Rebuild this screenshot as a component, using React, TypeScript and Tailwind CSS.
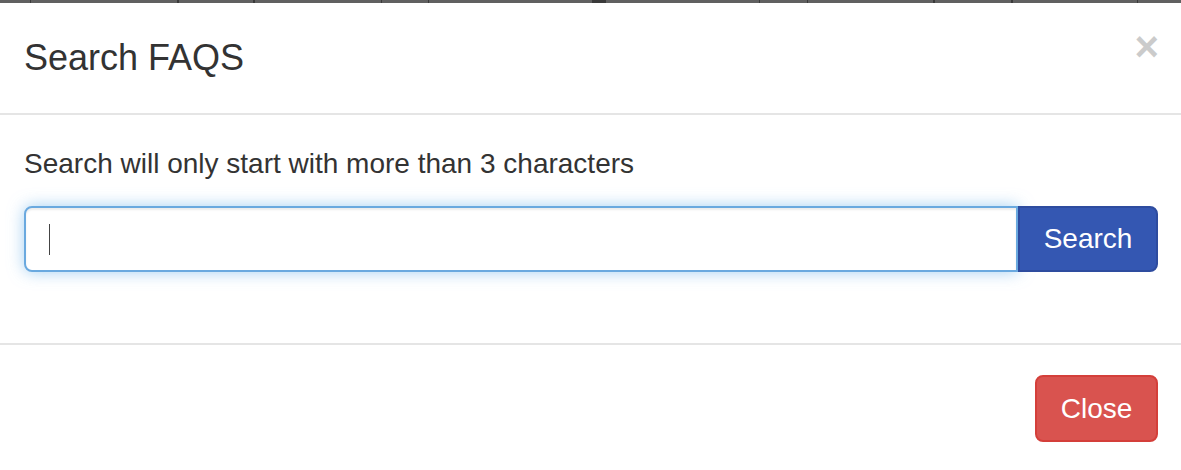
import React from "react";

const ticks: [number, number][] = [
  [30, 1],
  [177, 2],
  [253, 2],
  [381, 1],
  [428, 1],
  [592, 14],
  [759, 1],
  [807, 1],
  [933, 2],
  [1011, 2],
  [1137, 1],
];

function TopStrip() {
  const parts: React.ReactNode[] = [];
  let x = 0;
  ticks.forEach(([pos, w], i) => {
    parts.push(<div key={"s" + i} style={{ width: pos - x }} className="h-full shrink-0" />);
    parts.push(<div key={"t" + i} style={{ width: w }} className="h-full shrink-0 bg-[#3a3a3a]" />);
    x = pos + w;
  });
  return <div className="flex h-[3px] w-full bg-[#606060]">{parts}</div>;
}

export default function App() {
  return (
    <div
      className="w-[1181px] h-[470px] bg-white text-[#333333] overflow-hidden"
      style={{ fontFamily: '"Liberation Sans", Arial, sans-serif' }}
    >
      <TopStrip />
      {/* Header */}
      <div className="flex h-[112px] border-b-2 border-[#e5e5e5] pl-[24px] pr-[22px]">
        <h4 className="self-center text-[36px] leading-none font-normal">Search FAQS</h4>
        <button className="ml-auto self-start mt-[23px] text-[42px] leading-none font-bold text-black opacity-20">
          ×
        </button>
      </div>
      {/* Body */}
      <div className="h-[228px] pl-[24px] pr-[23px] pt-[35px]">
        <p className="text-[28px] leading-none">Search will only start with more than 3 characters</p>
        <div className="mt-[28px] flex h-[66px]">
          <div className="flex flex-1 items-center rounded-l-[8px] border-2 border-[#6aa9df] bg-white pl-[23px] shadow-[inset_0_2px_2px_rgba(0,0,0,0.075),0_0_16px_rgba(102,175,233,0.6)]">
            <div className="h-[31px] w-px bg-[#444444]" />
          </div>
          <button className="flex w-[140px] items-center justify-center rounded-r-[8px] border-2 border-[#2e4c9f] bg-[#3457b2] text-[28px] leading-none text-white">
            Search
          </button>
        </div>
      </div>
      {/* Footer */}
      <div className="flex justify-end border-t-2 border-[#e5e5e5] pr-[23px] pt-[30px]">
        <button className="flex h-[67px] w-[123px] items-center justify-center rounded-[8px] border-2 border-[#d43f3a] bg-[#d9534f] text-[28px] leading-none text-white">
          Close
        </button>
      </div>
    </div>
  );
}
